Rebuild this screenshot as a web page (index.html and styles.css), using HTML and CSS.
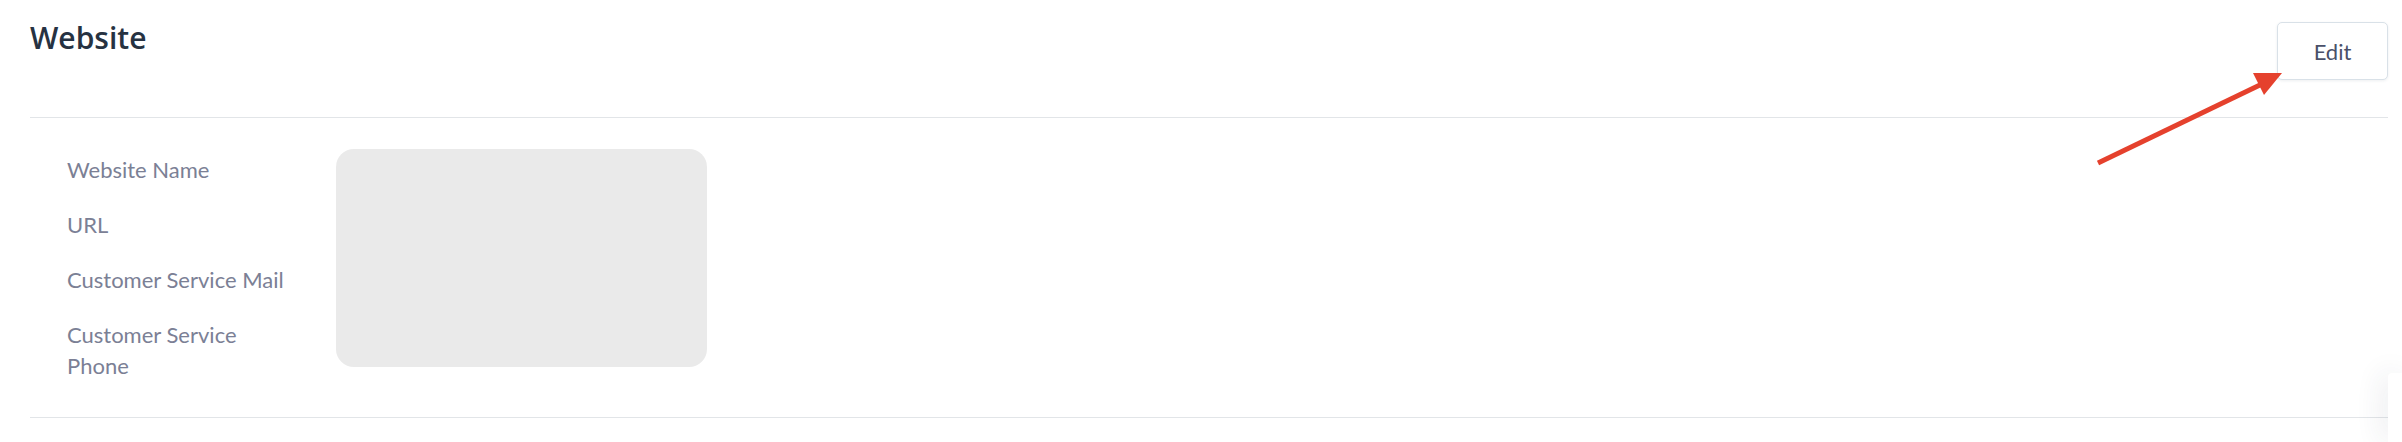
FILE: index.html
```html
<!DOCTYPE html>
<html lang="en">
<head>
<meta charset="utf-8">
<title>Website</title>
<link rel="stylesheet" href="styles.css">
</head>
<body>
<section class="card">
  <header class="card-header">
    <h2 class="card-title">Website</h2>
    <button class="btn-edit" type="button">Edit</button>
  </header>
  <div class="card-body">
    <ul class="labels">
      <li>Website Name</li>
      <li>URL</li>
      <li>Customer Service Mail</li>
      <li>Customer Service Phone</li>
    </ul>
    <div class="placeholder"></div>
  </div>
</section>
<svg class="annotation" width="2402" height="442" viewBox="0 0 2402 442" aria-hidden="true">
  <line x1="2098" y1="163" x2="2262" y2="84" stroke="#e5412d" stroke-width="5"/>
  <polygon points="2253,73 2282,73 2264,95" fill="#e5412d"/>
</svg>
<div class="side-panel"></div>
</body>
</html>
```
FILE: styles.css
```css
html, body {
  margin: 0;
  padding: 0;
  background: #ffffff;
  height: 442px;
  overflow: hidden;
}

body {
  position: relative;
  font-family: Lato, "Liberation Sans", sans-serif;
}

.card {
  margin: 0 14px 0 30px;
}

.card-header {
  display: flex;
  justify-content: space-between;
  align-items: flex-start;
  height: 118px;
  box-sizing: border-box;
  border-bottom: 1px solid #e2e5e8;
}

.card-title {
  margin: 20px 0 0 0;
  font-family: "Open Sans", "Noto Sans", sans-serif;
  font-weight: 600;
  font-size: 30px;
  line-height: 36px;
  color: #263242;
}

.btn-edit {
  margin-top: 22px;
  width: 111px;
  height: 58px;
  box-sizing: border-box;
  background: #ffffff;
  border: 1px solid #d9e1e8;
  border-radius: 5px;
  box-shadow: 0 1px 3px rgba(30, 50, 80, 0.08);
  font-family: Lato, "Liberation Sans", sans-serif;
  font-size: 22px;
  color: #4a5069;
  padding: 0;
}

.card-body {
  display: flex;
  align-items: flex-start;
  padding: 31px 0 36px 0;
  border-bottom: 1px solid #e2e5e8;
}

.labels {
  list-style: none;
  margin: 0 37px 0 0;
  padding: 5px 0 0 37px;
  width: 232px;
  display: flex;
  flex-direction: column;
  gap: 24px;
  font-size: 22px;
  line-height: 31px;
  color: #7b8095;
}

.labels li {
  margin: 0;
}

.placeholder {
  width: 371px;
  height: 218px;
  border-radius: 18px;
  background: #eaeaea;
}

.annotation {
  position: absolute;
  left: 0;
  top: 0;
  pointer-events: none;
}

.side-panel {
  position: absolute;
  left: 2388px;
  top: 373px;
  width: 14px;
  height: 69px;
  background: #ffffff;
  border-radius: 4px 0 0 0;
  box-shadow: -4px 0 28px rgba(40, 50, 70, 0.12);
}
```
